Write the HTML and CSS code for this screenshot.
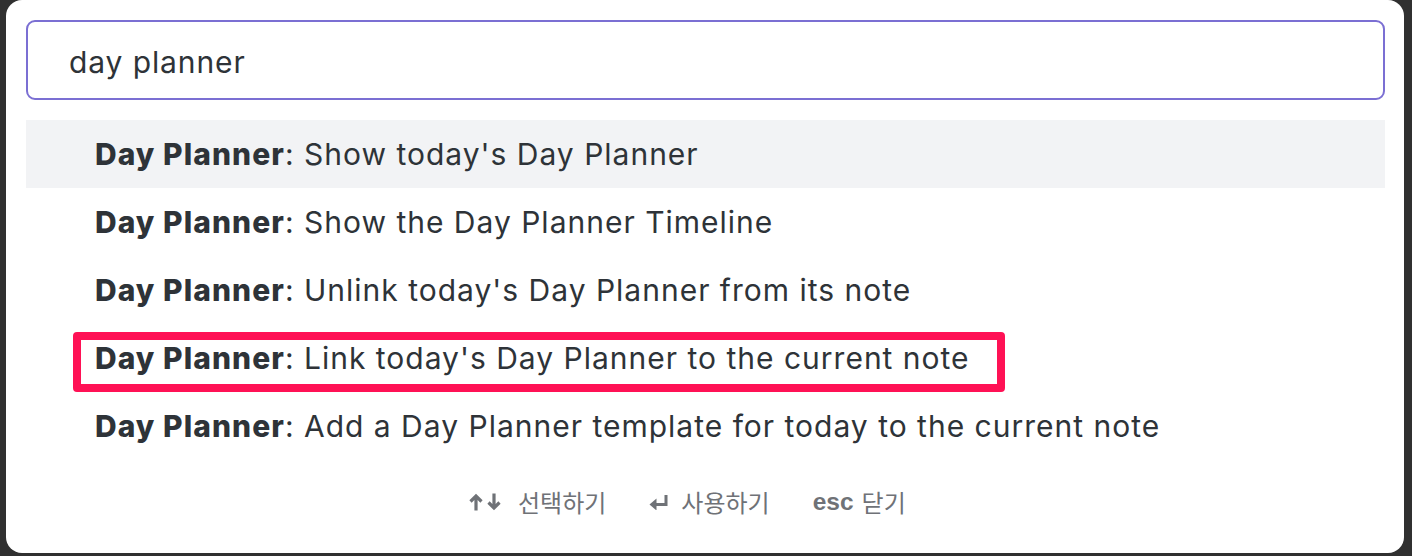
FILE: index.html
```html
<!DOCTYPE html>
<html lang="ko">
<head>
<meta charset="utf-8">
<link rel="stylesheet" href="styles.css">
</head>
<body>
<div class="panel">
  <div class="search">day planner</div>
  <div class="results">
    <div class="row selected"><b>Day Planner</b>: Show today's Day Planner</div>
    <div class="row"><b>Day Planner</b>: Show the Day Planner Timeline</div>
    <div class="row"><b>Day Planner</b>: Unlink today's Day Planner from its note</div>
    <div class="row marked"><b>Day Planner</b>: Link today's Day Planner to the current note<span class="highlight"></span></div>
    <div class="row"><b>Day Planner</b>: Add a Day Planner template for today to the current note</div>
  </div>
  <div class="footer">
    <div class="hint nav">
      <svg class="ico" width="32" height="18" viewBox="0 0 32 18"><path d="M7 17.5V3M1.5 8.5L7 3l5.5 5.5" fill="none" stroke="currentColor" stroke-width="3.2"/><path d="M25 0.5V15M19.5 9.5L25 15l5.5-5.5" fill="none" stroke="currentColor" stroke-width="3.2"/></svg>
      <span>선택하기</span>
    </div>
    <div class="hint use">
      <svg class="ico" width="19" height="16" viewBox="0 0 19 16"><path d="M17 1v9.5H4" fill="none" stroke="currentColor" stroke-width="3"/><path d="M0.5 10.5L7.5 4.5v12z" fill="currentColor"/></svg>
      <span>사용하기</span>
    </div>
    <div class="hint close">
      <b class="key">esc</b>
      <span>닫기</span>
    </div>
  </div>
</div>
</body>
</html>
```
FILE: styles.css
```css
html, body {
  margin: 0;
  padding: 0;
  background: #303030;
  height: 556px;
  overflow: hidden;
}
body {
  font-family: Inter, "Noto Sans", "Noto Sans CJK KR", sans-serif;
  color: #2e3338;
}
.panel {
  margin-left: 6px;
  width: 1398px;
  height: 553px;
  background: #ffffff;
  border-radius: 16px;
  box-sizing: border-box;
  padding: 20px 19px 0 20px;
  display: flex;
  flex-direction: column;
}
.search {
  height: 80px;
  box-sizing: border-box;
  border: 2px solid #7b6fd3;
  border-radius: 9px;
  padding-left: 41px;
  padding-top: 4px;
  display: flex;
  align-items: center;
  font-size: 30px;
  letter-spacing: 0.9px;
  color: #2e3338;
}
.results {
  margin-top: 20px;
  display: flex;
  flex-direction: column;
}
.row {
  height: 68px;
  display: flex;
  align-items: center;
  padding-left: 69px;
  font-size: 30px;
  letter-spacing: 1px;
  white-space: pre;
  position: relative;
}
.row b {
  font-weight: 800;
  letter-spacing: 1.05px;
}
.row.selected {
  background: #f2f3f5;
}
.highlight {
  position: absolute;
  left: 47px;
  top: 8px;
  width: 932px;
  height: 60px;
  box-sizing: border-box;
  border: 8px solid #ff1155;
  border-radius: 4px;
}
.footer {
  display: flex;
  justify-content: flex-start;
  gap: 43px;
  padding-left: 443px;
  margin-top: 24px;
  color: #6f7277;
  font-size: 24px;
}
.hint {
  display: flex;
  align-items: center;
  font-family: "Noto Sans CJK KR", sans-serif;
}
.hint.nav { gap: 17px; }
.hint.use { gap: 13px; }
.hint.close { gap: 8px; }
.ico {
  display: block;
}
.key {
  font-family: "Liberation Sans", sans-serif;
  font-weight: 700;
  font-size: 24.5px;
  color: #6f7277;
}
```
